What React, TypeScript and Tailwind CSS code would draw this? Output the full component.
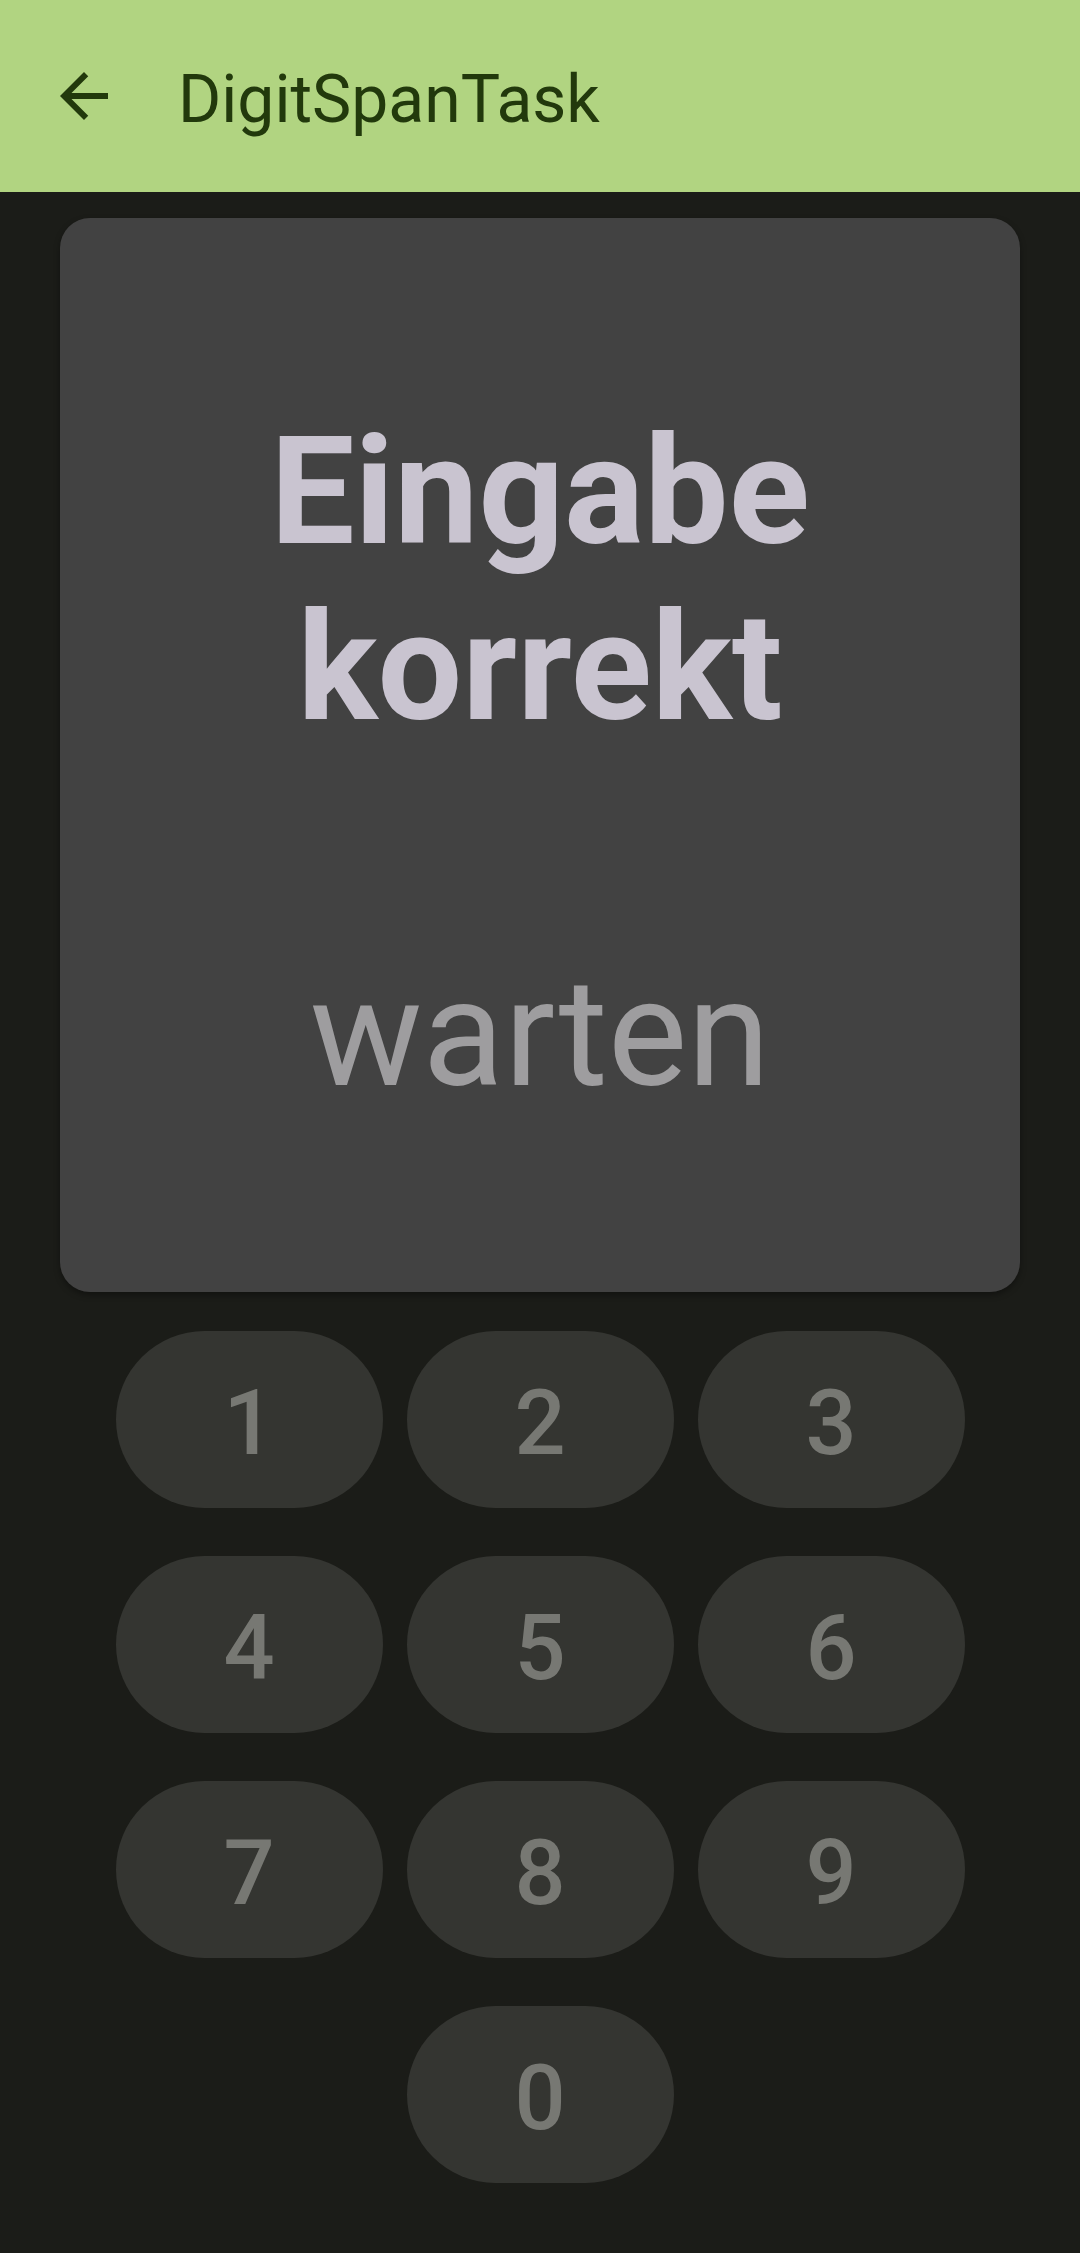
const keys = ["1", "2", "3", "4", "5", "6", "7", "8", "9"];

const KeyButton = ({ label }: { label: string }) => (
  <button className="flex h-[177px] w-[267px] items-center justify-center rounded-full bg-[#343531] pt-[8px] text-[90px] leading-[106px] font-medium text-[#777873]">
    {label}
  </button>
);

export default function App() {
  return (
    <div
      className="flex min-h-[2253px] w-[1080px] flex-col bg-[#1b1c18]"
      style={{ fontFamily: "Roboto, 'Noto Sans', sans-serif" }}
    >
      {/* top bar */}
      <header className="flex h-[192px] items-center bg-[#b1d481] pl-[48px]">
        <svg viewBox="0 0 24 24" className="h-[72px] w-[72px]" fill="#22390c">
          <path d="M20 11H7.83l5.59-5.59L12 4l-8 8 8 8 1.41-1.41L7.83 13H20v-2z" />
        </svg>
        <h1 className="ml-[58px] mt-[7px] text-[66px] leading-[77px] font-normal text-[#22390c]">
          DigitSpanTask
        </h1>
      </header>

      {/* status card */}
      <div className="mx-[60px] mt-[26px] flex h-[1074px] flex-col items-center rounded-[30px] bg-[#424242] pt-[186px] shadow-[0_3px_6px_rgba(0,0,0,0.35)]">
        <p className="text-center text-[150px] leading-[176px] font-bold text-[#c9c4d0]">
          Eingabe
          <br />
          korrekt
        </p>
        <p className="mt-[190px] text-[150px] leading-[176px] font-normal text-[#9e9d9f]">
          warten
        </p>
      </div>

      {/* keypad */}
      <div className="mx-auto mt-[39px] grid w-[849px] grid-cols-3 gap-x-[24px] gap-y-[48px]">
        {keys.map((k) => (
          <KeyButton key={k} label={k} />
        ))}
        <div />
        <KeyButton label="0" />
        <div />
      </div>
    </div>
  );
}
